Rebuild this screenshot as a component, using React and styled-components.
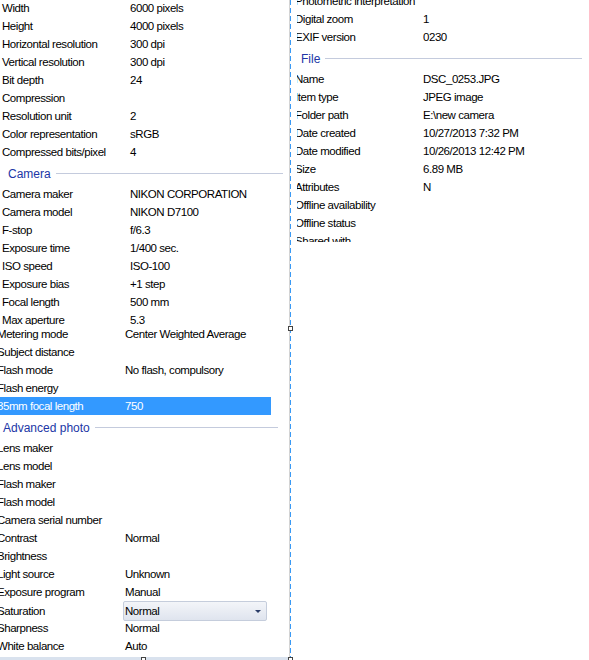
import React from "react";
import styled, { createGlobalStyle } from "styled-components";

const GlobalStyle = createGlobalStyle`
  html, body { margin: 0; padding: 0; background: #fff; overflow: hidden; }
  body { font-family: "Liberation Sans", Arial, sans-serif; }
  * { box-sizing: border-box; }
`;

const Window = styled.div`
  position: relative;
  display: flex;
  width: 589px;
  height: 660px;
  overflow: hidden;
  background: #fff;
`;

const LeftPane = styled.div`
  width: 290px;
  flex: none;
  display: flex;
  flex-direction: column;
  border-right: 1px solid #d4d4d4;
  overflow: hidden;
`;

const Block = styled.div`
  padding-right: 6px;
  overflow: hidden;
  flex: ${(p) => (p.$grow ? "1" : "none")};
  height: ${(p) => (p.$height ? `${p.$height}px` : "auto")};
  margin: ${(p) => p.$margin || "0"};
`;

const Row = styled.div`
  display: grid;
  grid-template-columns: 128px 1fr;
  align-items: center;
  height: 18px;
  padding-left: 2px;
  margin-right: 7px;
  font-size: 11.5px;
  letter-spacing: -0.45px;
  white-space: nowrap;
  color: ${(p) => (p.$selected ? "#fff" : "#000")};
  background: ${(p) => (p.$selected ? "#3399ff" : "transparent")};
`;

const Cell = styled.span`
  overflow: visible;
`;

const Header = styled.div`
  display: flex;
  align-items: center;
  gap: 5px;
  height: 24px;
  padding: 1px 0 0 8px;
  font-size: 12px;
  color: #2136a6;
  white-space: nowrap;
  &::after {
    content: "";
    flex: 1;
    height: 1px;
    background: #c4cbdd;
  }
`;

const Combo = styled.div`
  position: relative;
  width: 144px;
  height: 20px;
  margin-left: -2px;
  padding-left: 1px;
  display: flex;
  align-items: center;
  border: 1px solid #c5cddc;
  border-radius: 2px;
  background: linear-gradient(to bottom, #f3f5f9, #dfe4ee);
  color: #000;
`;

const Arrow = styled.span`
  position: absolute;
  right: 5px;
  top: 8px;
  width: 0;
  height: 0;
  border-left: 3px solid transparent;
  border-right: 3px solid transparent;
  border-top: 3px solid #2a3c68;
`;

const Footer = styled.div`
  flex: none;
  height: 3px;
  background: #d9e2ee;
`;

const Divider = styled.div`
  width: 1px;
  flex: none;
  height: 660px;
  background: repeating-linear-gradient(to bottom, #3a9af5 0 5px, #fff 5px 8px);
`;

const RightPane = styled.div`
  flex: 1;
  padding-left: 6px;
`;

const Clip = styled.div`
  height: 242px;
  overflow: hidden;
`;

const RightContent = styled.div`
  margin: -8px 0 0 -4px;
  padding-right: 7px;
`;

const Handle = styled.span`
  position: absolute;
  width: 5px;
  height: 5px;
  border: 1px solid #444;
  background: #fff;
  left: ${(p) => p.$x}px;
  top: ${(p) => p.$y}px;
`;

const upper = [
  ["Width", "6000 pixels"],
  ["Height", "4000 pixels"],
  ["Horizontal resolution", "300 dpi"],
  ["Vertical resolution", "300 dpi"],
  ["Bit depth", "24"],
  ["Compression", ""],
  ["Resolution unit", "2"],
  ["Color representation", "sRGB"],
  ["Compressed bits/pixel", "4"],
  { header: "Camera" },
  ["Camera maker", "NIKON CORPORATION"],
  ["Camera model", "NIKON D7100"],
  ["F-stop", "f/6.3"],
  ["Exposure time", "1/400 sec."],
  ["ISO speed", "ISO-100"],
  ["Exposure bias", "+1 step"],
  ["Focal length", "500 mm"],
  ["Max aperture", "5.3"],
];

const lower = [
  ["Metering mode", "Center Weighted Average"],
  ["Subject distance", ""],
  ["Flash mode", "No flash, compulsory"],
  ["Flash energy", ""],
  ["35mm focal length", "750", "selected"],
  { header: "Advanced photo" },
  ["Lens maker", ""],
  ["Lens model", ""],
  ["Flash maker", ""],
  ["Flash model", ""],
  ["Camera serial number", ""],
  ["Contrast", "Normal"],
  ["Brightness", ""],
  ["Light source", "Unknown"],
  ["Exposure program", "Manual"],
  ["Saturation", "Normal", "combo"],
  ["Sharpness", "Normal"],
  ["White balance", "Auto"],
  ["", ""],
];

const right = [
  ["Photometric interpretation", ""],
  ["Digital zoom", "1"],
  ["EXIF version", "0230"],
  { header: "File" },
  ["Name", "DSC_0253.JPG"],
  ["Item type", "JPEG image"],
  ["Folder path", "E:\\new camera"],
  ["Date created", "10/27/2013 7:32 PM"],
  ["Date modified", "10/26/2013 12:42 PM"],
  ["Size", "6.89 MB"],
  ["Attributes", "N"],
  ["Offline availability", ""],
  ["Offline status", ""],
  ["Shared with", ""],
];

function List({ items }) {
  return items.map((it, i) => {
    if (!Array.isArray(it)) return <Header key={i}>{it.header}</Header>;
    const [label, value, kind] = it;
    return (
      <Row key={i} $selected={kind === "selected"}>
        <Cell>{label}</Cell>
        {kind === "combo" ? (
          <Combo>
            {value}
            <Arrow />
          </Combo>
        ) : (
          <Cell>{value}</Cell>
        )}
      </Row>
    );
  });
}

export default function App() {
  return (
    <>
      <GlobalStyle />
      <Window>
        <LeftPane>
          <Block $height={326} $margin="-1px 0 0 0">
            <List items={upper} />
          </Block>
          <Block $grow $margin="0 5px 0 -5px">
            <List items={lower} />
          </Block>
          <Footer />
        </LeftPane>
        <Divider />
        <RightPane>
          <Clip>
            <RightContent>
              <List items={right} />
            </RightContent>
          </Clip>
        </RightPane>
        <Handle $x={288} $y={326} />
        <Handle $x={288} $y={657} />
        <Handle $x={141} $y={657} />
      </Window>
    </>
  );
}
